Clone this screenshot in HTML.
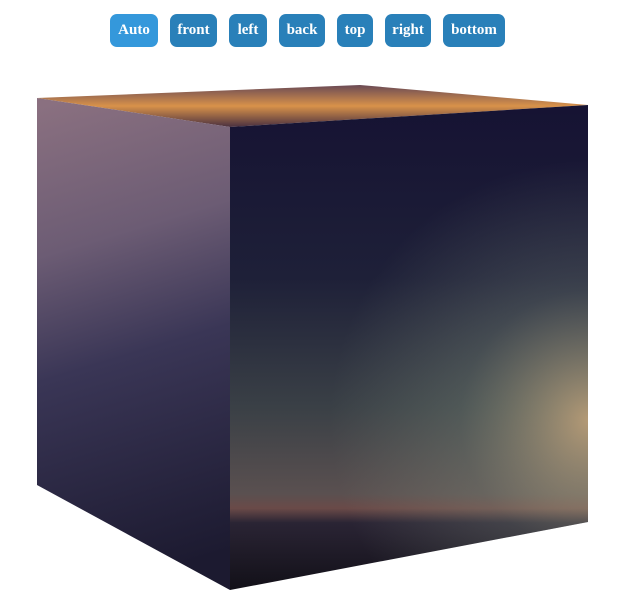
<!DOCTYPE html>
<html><head><meta charset="utf-8"><style>
html,body{margin:0;padding:0;background:#fff;width:625px;height:601px;overflow:hidden}
.b{position:absolute;top:14px;height:33px;border-radius:7px;background:#2980b9;color:#fff;font:bold 15px "Liberation Serif",serif;line-height:33px;text-align:center}
</style></head><body>
<div class="b" style="left:110px;width:48px;background:#3498db">Auto</div>
<div class="b" style="left:170px;width:47px">front</div>
<div class="b" style="left:229px;width:38px">left</div>
<div class="b" style="left:279px;width:46px">back</div>
<div class="b" style="left:337px;width:36px">top</div>
<div class="b" style="left:385px;width:46px">right</div>
<div class="b" style="left:443px;width:62px">bottom</div>
<svg width="625" height="601" style="position:absolute;left:0;top:0">
<defs>
<linearGradient id="t" x1="0" y1="0" x2="0" y2="1">
<stop offset="0" stop-color="#6a4a55"/><stop offset="0.5" stop-color="#d8924a"/><stop offset="1" stop-color="#4a3040"/></linearGradient>
<linearGradient id="l" gradientUnits="userSpaceOnUse" x1="60" y1="100" x2="200" y2="560">
<stop offset="0" stop-color="#8a7080"/><stop offset="0.3" stop-color="#6c5c74"/><stop offset="0.55" stop-color="#3a3656"/><stop offset="1" stop-color="#1c1a30"/></linearGradient>
<linearGradient id="r" gradientUnits="userSpaceOnUse" x1="0" y1="110" x2="0" y2="590">
<stop offset="0" stop-color="#161333"/><stop offset="0.35" stop-color="#1e2038"/><stop offset="0.62" stop-color="#3a4046"/><stop offset="0.8" stop-color="#5a5050"/><stop offset="0.83" stop-color="#6a4a48"/><stop offset="0.86" stop-color="#2a2434"/><stop offset="1" stop-color="#121018"/></linearGradient>
<radialGradient id="g" gradientUnits="userSpaceOnUse" cx="590" cy="420" r="260"><stop offset="0" stop-color="#e8c08a" stop-opacity="0.7"/><stop offset="0.5" stop-color="#90a08a" stop-opacity="0.25"/><stop offset="1" stop-color="#90a08a" stop-opacity="0"/></radialGradient>
</defs>
<polygon points="37,98 360,85 588,105 230,127" fill="url(#t)"/>
<polygon points="37,98 230,127 230,590 37,485" fill="url(#l)"/>
<polygon points="230,127 588,105 588,522 230,590" fill="url(#r)"/>
<polygon points="230,127 588,105 588,522 230,590" fill="url(#g)"/>
</svg>
</body></html>
